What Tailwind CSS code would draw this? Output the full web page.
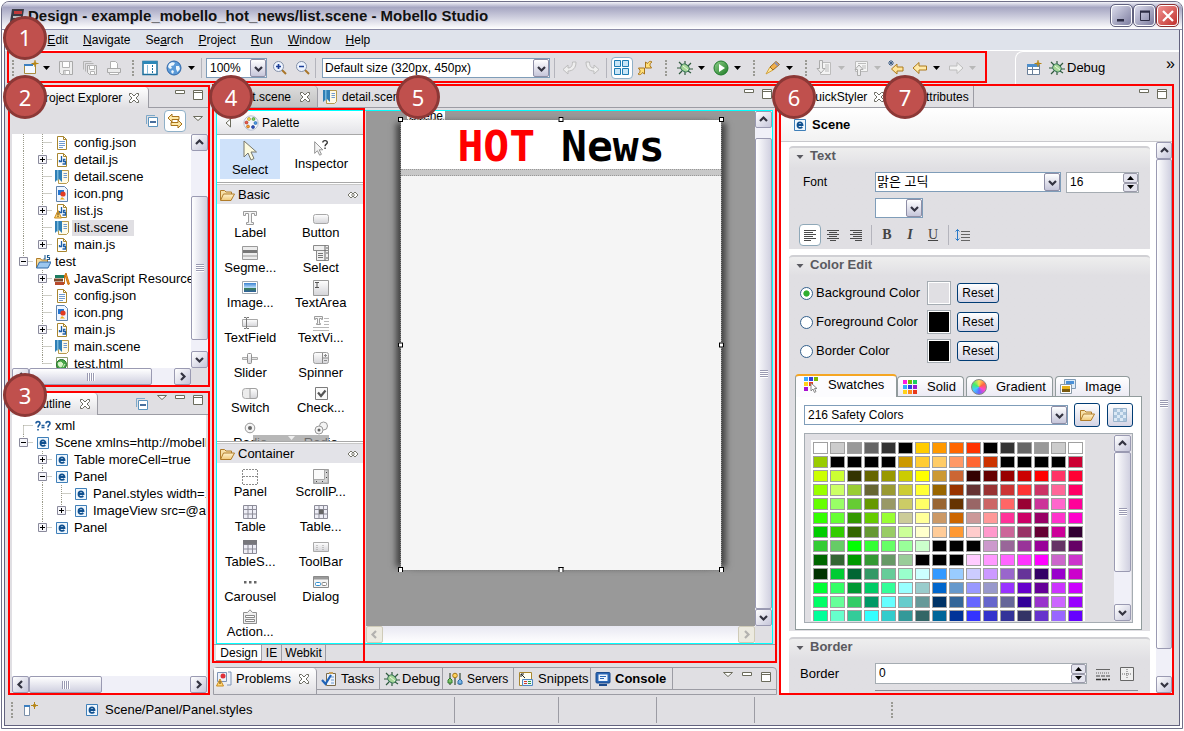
<!DOCTYPE html>
<html lang="en">
<head>
<meta charset="utf-8">
<title>Design - example_mobello_hot_news/list.scene - Mobello Studio</title>
<script src="https://cdn.jsdelivr.net/npm/@tailwindcss/browser@4"></script>
</head>
<body class="bg-white font-['Liberation_Sans','Noto_Sans_CJK_KR',sans-serif] text-[13px] leading-4 text-black">

<svg class="absolute size-0" aria-hidden="true">
  <defs>
    <linearGradient id="g-run" x1="0" y1="0" x2="1" y2="1"><stop offset="0" stop-color="#8fd08a"/><stop offset="1" stop-color="#1c7a24"/></linearGradient>
    <linearGradient id="g-btn" x1="0" y1="0" x2="0" y2="1"><stop offset="0" stop-color="#fff"/><stop offset="1" stop-color="#d4d4d8"/></linearGradient>
    <linearGradient id="g-fold" x1="0" y1="0" x2="0" y2="1"><stop offset="0" stop-color="#fff3cf"/><stop offset="1" stop-color="#f0c878"/></linearGradient>
    <linearGradient id="g-sky" x1="0" y1="0" x2="0" y2="1"><stop offset="0" stop-color="#3b82d0"/><stop offset=".55" stop-color="#bfe3ff"/><stop offset=".6" stop-color="#3c7f5a"/><stop offset="1" stop-color="#2d5fa0"/></linearGradient>
  </defs>
  <symbol id="chev" viewBox="0 0 9 9"><path d="M1 3l3.500 3.500L8 3" fill="none" stroke="#333340" stroke-width="2.200"/></symbol>
  <symbol id="arrow" viewBox="0 0 7 4"><path d="M0 0h7L3.500 4z" fill="currentColor"/></symbol>
  <symbol id="x" viewBox="0 0 12 12"><path d="M1.500 1.500h2L6 4l2.500-2.500h2v2L8 6l2.500 2.500v2h-2L6 8l-2.500 2.500h-2v-2L4 6 1.500 3.500z" fill="#fff" stroke="#6b6b62"/></symbol>
  <symbol id="min" viewBox="0 0 12 12"><path d="M1.500 1.500h9v3h-9z" fill="#fff" stroke="#6b6b5c"/></symbol>
  <symbol id="max" viewBox="0 0 12 12"><path d="M1.500 1.500h9v9h-9zM1.500 3.500h9" fill="#fff" stroke="#6b6b5c"/></symbol>
  <symbol id="menu" viewBox="0 0 12 12"><path d="M1.500 1.500h9L6 5.500z" fill="#fff" stroke="#6b6b5c"/></symbol>
  <symbol id="collapse" viewBox="0 0 16 16"><path d="M2.500 11V2.500H11" fill="none" stroke="#7fa9c8"/><path d="M4.500 4.500h9v9h-9z" fill="#fff" stroke="#5b93bd"/><path d="M6 9h6" stroke="#0c3f7c" stroke-width="1.500"/></symbol>
  <symbol id="link" viewBox="0 0 16 16"><path d="M1 5l4-4v2.500h7v3H5V9z" fill="#ffe9a8" stroke="#a8731c"/><path d="M15 11l-4-4v2.500H4v3h7V15z" fill="#ffe9a8" stroke="#a8731c"/></symbol>
  <symbol id="file" viewBox="0 0 16 16"><path d="M3.500 1.500h6l3 3v10h-9z" fill="#fff" stroke="#a8862f"/><path d="M9.500 1.500v3h3" fill="none" stroke="#a8862f"/><path d="M5 6.500h6M5 8.500h6M5 10.500h6M5 12.500h4" stroke="#6f9bd0"/></symbol>
  <symbol id="js" viewBox="0 0 16 16"><path d="M3.500 1.500h6l3 3v10h-9z" fill="#fff" stroke="#a8862f"/><path d="M9.500 1.500v3h3" fill="none" stroke="#a8862f"/><path d="M7.500 4v5.500h-2V8M11.500 7.500h-2v2h2v2.500h-3" fill="none" stroke="#1c5fa8" stroke-width="1.300"/></symbol>
  <symbol id="jswarn" viewBox="0 0 16 16"><use href="#js"/><path d="M4 7.500L7.500 15H.5z" fill="#ffd779" stroke="#c98a1d"/><path d="M4 9.500v3M4 13v1" stroke="#5a3a00"/></symbol>
  <symbol id="scene" viewBox="0 0 16 16"><path d="M4.500 1.500h10v11l-2 2h-8z" fill="#fffbe8" stroke="#b79b4e"/><path d="M9.500 4.500h3.500M9.500 6.500h3.500M9.500 8.500h3.500" stroke="#6f9bd0"/><path d="M1 1h7v12l-3.500-3.500L1 13z" fill="#2f7fb5"/><path d="M3 1h1.500v9.500L3 12z" fill="#75b7dd"/></symbol>
  <symbol id="png" viewBox="0 0 16 16"><path d="M2.500.5h8l3 3v12h-11z" fill="#eef5ff" stroke="#5f83ad"/><path d="M4 4h6v5H4z" fill="#2475d0"/><circle cx="9" cy="8" r="2.600" fill="#e23b22"/><path d="M8 11l3 2.500H6z" fill="#f2b01c"/></symbol>
  <symbol id="proj" viewBox="0 0 16 16"><path d="M1.500 14V4.500h4l1 1.500h6v2" fill="#f7dc9a" stroke="#b07c2a"/><path d="M1.500 14L4.500 8H16l-3 6z" fill="#9cc7ee" stroke="#2f6aa8"/><path d="M10 1v4H8.500M14.500 1.500h-2v2h2v2h-2.500" fill="none" stroke="#1d5c94" stroke-width="1.100"/></symbol>
  <symbol id="books" viewBox="0 0 16 16"><path d="M1 4h9v3H1z" fill="#1f7d62"/><path d="M0 7.500h9v3H0z" fill="#7c4a2a"/><path d="M1 11h9v3H1z" fill="#b8492b"/><path d="M12 2l3.500 11-1.500.5L11 4zM10.500 13V4" fill="#f29a1f" stroke="#c9700f"/></symbol>
  <symbol id="html" viewBox="0 0 16 16"><path d="M2.500 1.500h11v13h-11z" fill="#fff" stroke="#8a9a6a"/><circle cx="7.500" cy="8.500" r="5" fill="#49a84a" stroke="#21702a"/><path d="M4 7l3-1 2 2-2 3-2-1zM9 11l2-3" fill="#d9f3c8" stroke="#d9f3c8"/></symbol>
  <symbol id="e" viewBox="0 0 16 16"><path d="M2.500 2.500h11v11h-11z" fill="#eef6fd" stroke="#3f7fb8"/><path d="M5.200 8h5.300c0-3.400-5-3.400-5 .2 0 3.300 3.600 3 4.800 1.800" fill="none" stroke="#10508f" stroke-width="1.800"/></symbol>
  <symbol id="xml" viewBox="0 0 16 16"><path d="M1 5.500c0-2.500 4-2.500 4 0C5 7 3 7 3 9.500M3 11v1.500M11 5.500c0-2.500 4-2.500 4 0 0 1.500-2 1.500-2 4M13 11v1.500M6.500 7.500h3M6.500 9.500h3" fill="none" stroke="#1f5c9c" stroke-width="1.600"/></symbol>
  <symbol id="new" viewBox="0 0 16 16"><path d="M1.500 4.500h11v9h-11z" fill="#f3f8ff" stroke="#a98a3c"/><path d="M1 4h9v2H1z" fill="#3c7fc0"/><path d="M12 0v7M8.500 3.500h7M12 1.500l1.500 2-1.500 2-1.500-2z" fill="#fff0a0" stroke="#b58518"/></symbol>
  <symbol id="save" viewBox="0 0 16 16"><path d="M1.500 1.500h13v13h-11l-2-2z" fill="#eee" stroke="#a9a9a9"/><path d="M4.500 1.500h7v6h-7zM5.500 10.500h6v4h-6z" fill="#fff" stroke="#b4b4b4"/><path d="M7 11v3" stroke="#aaa"/></symbol>
  <symbol id="saveall" viewBox="0 0 16 16"><path d="M1.500 9.500v-8h8M3.500 11.500v-8h8" fill="none" stroke="#b4b4b4"/><path d="M5.500 5.500h9v9h-7l-2-2z" fill="#eee" stroke="#a9a9a9"/><path d="M7.500 5.500h5v4h-5zM8.500 11.500h4v3h-4z" fill="#fff" stroke="#b4b4b4"/></symbol>
  <symbol id="print" viewBox="0 0 16 16"><path d="M4.500 8V1.500h5l2 2V8" fill="#fff" stroke="#b0b0b0"/><path d="M1.500 8.500h13v4h-13z" fill="#ececec" stroke="#a9a9a9"/><path d="M3.500 12.500h9v2h-9z" fill="#fff" stroke="#b0b0b0"/></symbol>
  <symbol id="layout" viewBox="0 0 16 16"><path d="M1 1.500h14v13H1z" fill="#fff" stroke="#1d6f9c" stroke-width="1.500"/><path d="M1 1h14v3H1z" fill="#2c88b8"/><path d="M5.500 5v9" stroke="#8dbfdc"/><path d="M10.500 5v9" stroke="#1d6f9c" stroke-dasharray="2 1"/></symbol>
  <symbol id="globe" viewBox="0 0 16 16"><circle cx="8" cy="8" r="7" fill="#5b9ad8" stroke="#2e66a8"/><path d="M3 4c2-2 5-2 6-1L7.500 5.500 5 6l1 2-2 1-2-2zM10 6l3 0 1 3-2.500 3-1.500-3zM6 10l2 1-1 3-2-2z" fill="#eef6fc"/></symbol>
  <symbol id="zin" viewBox="0 0 16 16"><path d="M9.500 9.500L14 14" stroke="#a9762a" stroke-width="2"/><circle cx="6.500" cy="6.500" r="5" fill="#eef4ff" stroke="#8390a8"/><path d="M4 6.500h5M6.500 4v5" stroke="#1d3f98" stroke-width="1.700"/></symbol>
  <symbol id="zout" viewBox="0 0 16 16"><path d="M9.500 9.500L14 14" stroke="#a9762a" stroke-width="2"/><circle cx="6.500" cy="6.500" r="5" fill="#eef4ff" stroke="#8390a8"/><path d="M4 6.500h5" stroke="#1d3f98" stroke-width="1.700"/></symbol>
  <symbol id="undo" viewBox="0 0 16 16"><path d="M1 9.500L6 5v3c3 0 4.500-2 4.500-6H14c0 6-3 9-8 9v3z" fill="#eee" stroke="#bdbdbd"/></symbol>
  <symbol id="redo" viewBox="0 0 16 16"><path d="M15 9.500L10 5v3C7 8 5.500 6 5.500 2H2c0 6 3 9 8 9v3z" fill="#eee" stroke="#bdbdbd"/></symbol>
  <symbol id="four" viewBox="0 0 16 16"><path d="M.5.5h6v6h-6zM8.500.5h6v6h-6zM.5 8.500h6v6h-6zM8.500 8.500h6v6h-6z" fill="#c9e6f7" stroke="#1f7db4"/></symbol>
  <symbol id="refresh" viewBox="0 0 16 16"><path d="M8.500 8V2l2 1.500c1.500-2.500 3-2.500 4.500-1.500-1.500.5-2 1.500-2 3.500l1.500 2.500zM7.500 8v6l-2-1.500c-1.500 2.500-3 2.500-4.500 1.500 1.500-.5 2-1.500 2-3.500L1.500 8z" fill="#ffe07a" stroke="#a8741a"/></symbol>
  <symbol id="bug" viewBox="0 0 16 16"><path d="M5 5L2 2M8 4V1M11 6l3-3M4 8H0M5 11l-3 3M8 12v3M12 9h4M11 11l3 2" stroke="#2f5a3d" stroke-width="1.200"/><ellipse cx="8" cy="8" rx="4.500" ry="3.600" fill="#a6d698" stroke="#2c6a50" transform="rotate(35 8 8)"/><path d="M6 6l5 4" stroke="#e8fbe0"/></symbol>
  <symbol id="run" viewBox="0 0 16 16"><circle cx="8" cy="8" r="7" fill="url(#g-run)" stroke="#1f7a2c"/><path d="M6 4l6 4-6 4z" fill="#fff"/></symbol>
  <symbol id="torch" viewBox="0 0 16 16"><path d="M1 14l4-7 3 3z" fill="#ffe9a0" stroke="#d1a03a"/><path d="M5 7l6-5.500 3.500 3L8 10z" fill="#f2b04c" stroke="#9c6a24"/><path d="M10 2.500l3 3" stroke="#8c90b8" stroke-width="2"/></symbol>
  <symbol id="imp" viewBox="0 0 16 16"><path d="M4.500 2.500h10v12h-10z" fill="#f4f4f4" stroke="#bcbcbc"/><path d="M9 5h4M9 7h4M9 9h4M9 11h4" stroke="#bcbcbc"/><path d="M3.500.5h3v8h2.500L5 13 1 8.500h2.500z" fill="#eee" stroke="#ababab"/></symbol>
  <symbol id="exp" viewBox="0 0 16 16"><path d="M2.500 1.500h12v10h-12z" fill="#f4f4f4" stroke="#bcbcbc"/><path d="M5 3.500h8M9 6h4M9 8h4" stroke="#bcbcbc"/><path d="M4.500 15.500v-6H2L6 5l4 4.500H7.500v6z" fill="#eee" stroke="#ababab"/></symbol>
  <symbol id="sback" viewBox="0 0 16 16"><path d="M3.500 9L9 4v3h6v4H9v3z" fill="#ffe49a" stroke="#ad7a1c"/><path d="M3 0v6M0 3h6M1 1l4 4M5 1L1 5" stroke="#3e5f86"/></symbol>
  <symbol id="back" viewBox="0 0 16 16"><path d="M1 8l6-5.500V6h7.500v4H7v3.500z" fill="#ffe9a8" stroke="#ad7a1c"/></symbol>
  <symbol id="fwd" viewBox="0 0 16 16"><path d="M15 8L9 2.500V6H1.500v4H9v3.500z" fill="#f2f2f2" stroke="#bdbdbd"/></symbol>
  <symbol id="persp" viewBox="0 0 16 16"><path d="M1.500 4.500h12v10h-12zM1.500 9.500h12M6.500 7v7.500" fill="#fff" stroke="#6a7f98"/><path d="M1 4h12v3H1z" fill="#4f8fca"/><path d="M12 0v7M8.500 3.500h7M12 1.500l1.500 2-1.500 2-1.500-2z" fill="#fff0a0" stroke="#b58518"/></symbol>
  <symbol id="fast" viewBox="0 0 16 16"><path d="M2.500 3.500h5v10h-5z" fill="#fff" stroke="#7a8fa8"/><path d="M2 3h6v2H2z" fill="#3c7fc0"/><path d="M12.500 0v7M9 3.500h7M12.500 1.500l1.500 2-1.500 2-1.500-2z" fill="#fff0a0" stroke="#b58518"/></symbol>
  <symbol id="palette" viewBox="0 0 16 16"><circle cx="8" cy="8" r="7.200" fill="#f2f5fb" stroke="#b8c0d0"/><g stroke-width=".6"><circle cx="6" cy="4" r="1.500" fill="#ffe14a" stroke="#a58a10"/><circle cx="10.500" cy="4" r="1.500" fill="#7ed05a" stroke="#3b7c22"/><circle cx="3.500" cy="7.500" r="1.500" fill="#ef5a4a" stroke="#9c2318"/><circle cx="12.500" cy="8" r="1.500" fill="#4a9be8" stroke="#1c5aa0"/><circle cx="5" cy="11.500" r="1.500" fill="#f79a2a" stroke="#a85a0c"/><circle cx="10" cy="12" r="1.500" fill="#2c4fc0" stroke="#16307c"/></g></symbol>
  <symbol id="folder" viewBox="0 0 16 16"><path d="M1.500 13V3.500h4l1.500 1.500h5.500V7" fill="#f7e0a8" stroke="#b07c2a"/><path d="M1.500 13.500L4.500 7h11l-3.500 6.500z" fill="url(#g-fold)" stroke="#b07c2a"/></symbol>
  <symbol id="pin" viewBox="0 0 12 10"><path d="M4 2L1 5l3 3 2-2 2 2 3-3-3-3-2 2zM4 5h4" fill="#fff" stroke="#77776c"/></symbol>
  <symbol id="cursor" viewBox="0 0 20 24"><path d="M4 2v16l4-4 3 7 3-1.500-3-6.500h5.500z" fill="#fdfbe0" stroke="#77776a"/></symbol>
  <symbol id="inspect" viewBox="0 0 20 20"><path d="M3 3v13l3-3 2.500 5 2-1-2.500-5h4z" fill="#f4f4f4" stroke="#8a8a8a"/><path d="M12 4c0-3 5-3 5 0 0 2-2.500 1.500-2.500 4M14.500 9.500V11" fill="none" stroke="#333" stroke-width="1.500"/></symbol>
  <symbol id="p-label" viewBox="0 0 16 16"><path d="M1.500 1.500h13v4h-2v-2h-3v9h2v2h-7v-2h2v-9h-3v2h-2z" fill="#f5f5f5" stroke="#9c9c9c"/></symbol>
  <symbol id="p-button" viewBox="0 0 16 16"><rect x=".5" y="4.500" width="15" height="9" rx="2" fill="url(#g-btn)" stroke="#a8a8a8"/></symbol>
  <symbol id="p-segment" viewBox="0 0 16 16"><path d="M.5 1.500h15v13H.5z" fill="#ececec" stroke="#9a9a9a"/><path d="M1 5h14v3H1z" fill="#777"/><path d="M1 11h14" stroke="#9a9a9a"/></symbol>
  <symbol id="p-select" viewBox="0 0 16 16"><path d="M.5.500h15v5H.5zM3.500 5.500h12v10h-12z" fill="#f0f0f0" stroke="#8a8a8a"/><path d="M5 8.500h5M5 10.500h5M5 12.500h5" stroke="#777"/><path d="M12 .500v15M13 3h2M13 8h2M13 13h2" stroke="#666"/></symbol>
  <symbol id="p-image" viewBox="0 0 16 16"><path d="M.5 1.500h15v12H.5z" fill="#fff" stroke="#a0a8b0"/><path d="M2 3h12v9H2z" fill="url(#g-sky)"/></symbol>
  <symbol id="p-textarea" viewBox="0 0 16 16"><path d="M.5.500h15v15H.5z" fill="url(#g-btn)" stroke="#9a9a9a"/><path d="M2 2.500h4M2 7.500h4M4 2.500v5" stroke="#555"/></symbol>
  <symbol id="p-textfield" viewBox="0 0 16 16"><path d="M.5 4.500h15v7H.5z" fill="url(#g-btn)" stroke="#a8a8a8"/><path d="M2 2.500h2l.5.500.5-.5h2M2 13.500h2l.5-.5.500.5h2M4.500 3v10" fill="none" stroke="#777"/></symbol>
  <symbol id="p-textview" viewBox="0 0 16 16"><path d="M1.500 1.500h8v3h-1v-1h-2v5h1v1h-4v-1h1v-5h-2v1h-1z" fill="#f5f5f5" stroke="#9c9c9c"/><path d="M11 3.500h5M11 6.500h5M11 9.500h5M0 12.500h16M0 15.500h16" stroke="#b8b8b8"/></symbol>
  <symbol id="p-slider" viewBox="0 0 16 16"><path d="M.5 7.500h15v2H.5z" fill="#e4e4e4" stroke="#aaa"/><rect x="5.500" y="3.500" width="4" height="10" rx="1" fill="url(#g-btn)" stroke="#909090"/></symbol>
  <symbol id="p-spinner" viewBox="0 0 16 16"><rect x=".5" y="2.500" width="15" height="11" rx="2" fill="url(#g-btn)" stroke="#a0a0a0"/><path d="M9.500 3v10M10 8h5M11 5.500h3M12.500 4v3M11 10.500h3" stroke="#8a8a8a"/></symbol>
  <symbol id="p-switch" viewBox="0 0 16 16"><rect x=".5" y="3.500" width="15" height="10" rx="3" fill="#ececec" stroke="#a8a8a8"/><path d="M8 3.500h5a2.500 2.500 0 0 1 2.500 2.500v5a2.500 2.500 0 0 1-2.500 2.500H8z" fill="url(#g-btn)" stroke="#a0a0a0"/></symbol>
  <symbol id="p-check" viewBox="0 0 16 16"><path d="M2.500 2.500h12v12h-12z" fill="#fafafa" stroke="#7c7c7c"/><path d="M5 7.500l3 3.500 4.500-5.500" fill="none" stroke="#555" stroke-width="2.200"/></symbol>
  <symbol id="p-radio" viewBox="0 0 16 16"><circle cx="8" cy="8" r="4.800" fill="#f4f4f4" stroke="#999"/><circle cx="8" cy="8" r="2" fill="#666"/></symbol>
  <symbol id="p-radios" viewBox="0 0 16 16"><circle cx="10.500" cy="6" r="4" fill="#f4f4f4" stroke="#999"/><circle cx="6" cy="10" r="4" fill="#f4f4f4" stroke="#999"/><circle cx="6" cy="10" r="1.500" fill="#666"/></symbol>
  <symbol id="p-panel" viewBox="0 0 16 16"><path d="M.5 1v14M15.500 1v14M1 .5h14M1 7.500h14M1 15.500h14" stroke="#8c8c8c" stroke-dasharray="2 1"/></symbol>
  <symbol id="p-scroll" viewBox="0 0 16 16"><path d="M.5.500h15v14H.5z" fill="#fafafa" stroke="#999"/><path d="M11.500 1v9.500H1V14h14V1z" fill="#d4d4d4" stroke="#aaa"/><path d="M13 3h1v1h-1zM13 8h1v1h-1zM3 12h1v1H3zM9 12h1v1H9z" fill="#444"/></symbol>
  <symbol id="p-table" viewBox="0 0 16 16"><path d="M1.500 1.500h13v13h-13zM1.500 5.500h13M1.500 10h13M6 1.500v13M10.500 1.500v13" fill="#eeeef6" stroke="#8c8c98"/></symbol>
  <symbol id="p-tablecell" viewBox="0 0 16 16"><use href="#p-table"/><path d="M6 5.500h4.500V10H6z" fill="#666"/></symbol>
  <symbol id="p-tablesec" viewBox="0 0 16 16"><use href="#p-table"/><path d="M1 1h14v4.500H1z" fill="#77777c"/></symbol>
  <symbol id="p-toolbar" viewBox="0 0 16 16"><path d="M.5 3.500h15v9H.5z" fill="url(#g-btn)" stroke="#aaa"/><path d="M4 6v5M10 6v5" stroke="#999" stroke-dasharray="1 1"/></symbol>
  <symbol id="p-carousel" viewBox="0 0 16 16"><path d="M2 7h2.500v2.500H2zM7 7h2.500v2.500H7zM12 7h2.500v2.500H12z" fill="#666"/></symbol>
  <symbol id="p-dialog" viewBox="0 0 16 16"><path d="M.5 2.500h15v11H.5z" fill="#f4f4f4" stroke="#8a8a8a"/><path d="M1 3h14v2.500H1z" fill="#9a9a9a"/><rect x="2.500" y="8.500" width="5" height="3" rx="1" fill="#fff" stroke="#2f8fd0"/><rect x="9" y="8.500" width="4.500" height="3" rx="1" fill="#fff" stroke="#888"/></symbol>
  <symbol id="p-action" viewBox="0 0 16 16"><path d="M1.500 3.500h4L8 .8l2.500 2.700h4v11h-13z" fill="#efefef" stroke="#909090"/><path d="M3.500 6.500h9v2h-9zM3.500 10.500h9v2h-9z" fill="#fff" stroke="#888"/></symbol>
  <symbol id="problems" viewBox="0 0 16 16"><path d="M1.500 1.500h9v9h-9zM12 1h3v13h-4" fill="#eef2fa" stroke="#7d93b5"/><circle cx="7" cy="5" r="2.500" fill="#e0313a"/><path d="M4 8l3.500 7h-7z" fill="#ffd779" stroke="#c98a1d"/><path d="M4 10v3" stroke="#5a3a00"/></symbol>
  <symbol id="tasks" viewBox="0 0 16 16"><path d="M5.500 2.500h9v12h-9z" fill="#eef4fc" stroke="#7a6a4a"/><path d="M8 1h4v2H8z" fill="#caa25a"/><path d="M10 6h3M10 9h3M10 12h3" stroke="#6f9bd0"/><path d="M1 9l3.500 4L10 4" fill="none" stroke="#1e63b8" stroke-width="2.200"/></symbol>
  <symbol id="servers" viewBox="0 0 16 16"><path d="M3 2v12M8 2v12M13 2v12" stroke="#5a6a5a" stroke-width="1.500"/><path d="M1 9l2-2 2 2v3H1z" fill="#7ec46a" stroke="#2f7a2a"/><circle cx="8" cy="4.500" r="2.300" fill="#ffd35a" stroke="#a8791a"/><path d="M11 10l2-2 2 2v3h-4z" fill="#7ab8e8" stroke="#2b6aa8"/></symbol>
  <symbol id="snippets" viewBox="0 0 16 16"><path d="M1.500 1.500h12v13h-12z" fill="#fffdf0" stroke="#a8862f"/><path d="M3 3l4 4M3 3h3M3 3v3" stroke="#222"/><path d="M4.500 8.500h10v6h-10z" fill="#eaf3ff" stroke="#4f86c0"/><path d="M6 10.500h3M6 12.500h3" stroke="#d43a2a"/><path d="M10 10.500h3M10 12.500h3" stroke="#2a9a3a"/></symbol>
  <symbol id="console" viewBox="0 0 16 16"><rect x="1" y="1.500" width="14" height="10.500" rx="1" fill="#2b67b5" stroke="#1c4a8c"/><path d="M3.500 3.500h9v6.500h-9z" fill="#eef5ff"/><path d="M5 5.500h6M5 7.500h4" stroke="#2b67b5"/><path d="M4 14h8" stroke="#1c4a8c" stroke-width="2"/></symbol>
  <symbol id="al-l" viewBox="0 0 16 16"><path d="M2 3.500h12M2 5.500h9M2 7.500h12M2 9.500h9M2 11.500h12M2 13.500h7" stroke="#4a4a4a"/></symbol>
  <symbol id="al-c" viewBox="0 0 16 16"><path d="M2 3.500h12M4 5.500h8M2 7.500h12M4 9.500h8M2 11.500h12M5 13.500h6" stroke="#4a4a4a"/></symbol>
  <symbol id="al-r" viewBox="0 0 16 16"><path d="M2 3.500h12M5 5.500h9M2 7.500h12M5 9.500h9M2 11.500h12M7 13.500h7" stroke="#4a4a4a"/></symbol>
  <symbol id="lineh" viewBox="0 0 16 16"><path d="M6 4.500h9M6 7.500h9M6 10.500h9M6 13.500h9" stroke="#666"/><path d="M2.500 2.500v11M.5 4.500l2-2 2 2M.5 11.500l2 2 2-2" fill="none" stroke="#2a7ac8"/></symbol>
  <symbol id="sw" viewBox="0 0 16 16"><path d="M1 0h4v4H1z" fill="#35a9ff"/><path d="M6 0h4v4H6z" fill="#2f3fe0"/><path d="M11 0h4v4h-4z" fill="#7ab800"/><path d="M1 5h4v4H1z" fill="#ffd21a"/><path d="M6 5h4v4H6z" fill="#e8381a"/><path d="M1 10h4v4H1z" fill="#a80fd0"/><path d="M8 6v8l2-2 1.500 3.500 1.500-1-1.500-3H14z" fill="#fff" stroke="#888"/></symbol>
  <symbol id="solid" viewBox="0 0 16 16"><path d="M1 1h4v4H1z" fill="#ff1ae0"/><path d="M6 1h4v4H6z" fill="#6fbf00"/><path d="M11 1h4v4h-4z" fill="#1ad060"/><path d="M1 6h4v4H1z" fill="#35a9ff"/><path d="M6 6h4v4H6z" fill="#2f3fe0"/><path d="M11 6h4v4h-4z" fill="#9a1ad0"/><path d="M1 11h4v4H1z" fill="#ffd21a"/><path d="M6 11h4v4H6z" fill="#ff8a1a"/><path d="M11 11h4v4h-4z" fill="#e8381a"/></symbol>
  <symbol id="imgs" viewBox="0 0 16 16"><path d="M4.500.500h11v9h-11z" fill="#dcebf8" stroke="#7f9ab5"/><path d="M6 2h8v3H6z" fill="#4a90d8"/><path d="M.5 5.500h11v9H.5z" fill="#fff" stroke="#8a9aa8"/><path d="M2 7h8v3H2z" fill="#e8b21a"/><path d="M2 10h8v3H2z" fill="#7a5a10"/></symbol>
  <symbol id="checker" viewBox="0 0 16 16"><path d="M1.500 1.500h13v13h-13z" fill="#dce9f5" stroke="#9ab4cc"/><path d="M2 2h3v3H2zM8 2h3v3H8zM5 5h3v3H5zM11 5h3v3h-3zM2 8h3v3H2zM8 8h3v3H8zM5 11h3v3H5zM11 11h3v3h-3z" fill="#aac4dc"/></symbol>
  <symbol id="lines" viewBox="0 0 16 16"><path d="M1 3.500h14" stroke="#666"/><path d="M1 7h14" stroke="#666" stroke-dasharray="1 1"/><path d="M1 10h14" stroke="#444" stroke-dasharray="4 1"/><path d="M1 13.500h14" stroke="#333" stroke-width="1.500" stroke-dasharray="5 1"/></symbol>
  <symbol id="cells" viewBox="0 0 16 16"><path d="M1.500 1.500h13v13h-13z" fill="#f0f0f0" stroke="#666"/><path d="M8 3v10M3 8h10" stroke="#666" stroke-dasharray="1 1"/></symbol>
</svg>

<div class="h-screen pt-px pr-px pb-[2px] pl-px">
<div class="flex h-full flex-col overflow-hidden rounded-t-lg border border-[#6f6f88] bg-[#e0dfe3]">

  <!-- title bar -->
  <header class="flex h-7 shrink-0 items-center border-b border-[#8c8ca8] bg-linear-to-b from-[#f4f4fa] via-[#a6a6c2] via-20% to-white pr-1 pl-2">
    <svg class="size-4" viewBox="0 0 16 16"><path d="M2 1h12l-2 13H0z" fill="#3a3a44"/><path d="M4 3h8v3H4z" fill="#c23a3a"/><path d="M3 8h8v2H3z" fill="#bbb"/></svg>
    <h1 class="ml-0.5 flex-1 text-[15px] font-bold whitespace-nowrap text-[#111] [text-shadow:1px_1px_0_#c8c8d8]">Design - example_mobello_hot_news/list.scene - Mobello Studio</h1>
    <div class="flex gap-0.5">
      <button aria-label="Minimize" class="grid size-[21px] place-items-center rounded border border-white bg-linear-to-br from-[#dcdcec] to-[#7e7ea0] outline outline-[#62627e]"><svg class="size-3" viewBox="0 0 12 12"><path d="M1 9h7v2.500H1z" fill="#2c2c44"/></svg></button>
      <button aria-label="Maximize" class="grid size-[21px] place-items-center rounded border border-white bg-linear-to-br from-[#dcdcec] to-[#7e7ea0] outline outline-[#62627e]"><svg class="size-3" viewBox="0 0 12 12"><path d="M1.500 2h9v8.500h-9z" fill="none" stroke="#2c2c44"/><path d="M1 1.500h10" stroke="#2c2c44" stroke-width="2"/></svg></button>
      <button aria-label="Close" class="grid size-[21px] place-items-center rounded border border-white bg-linear-to-br from-[#f09090] to-[#c02c2c] outline outline-[#8c3030]"><svg class="size-3" viewBox="0 0 12 12"><path d="M1 1l10 10M11 1L1 11" stroke="#fff" stroke-width="2.200"/></svg></button>
    </div>
  </header>

  <div class="flex min-h-0 flex-1 flex-col border-2 border-t-0 border-white">
  <div class="flex min-h-0 flex-1 flex-col border border-t-0 border-[#62627e]">

    <!-- menu bar -->
    <nav class="flex h-5 shrink-0 items-center gap-[15px] bg-[#dfe3eb] pl-2 text-xs">
      <a href="#"><u>F</u>ile</a><a href="#"><u>E</u>dit</a><a href="#"><u>N</u>avigate</a><a href="#">Se<u>a</u>rch</a><a href="#"><u>P</u>roject</a><a href="#"><u>R</u>un</a><a href="#"><u>W</u>indow</a><a href="#"><u>H</u>elp</a>
    </nav>

    <!-- tool bar -->
    <div class="flex h-[34px] shrink-0 border-t border-white pl-0.5 text-xs">
      <div class="relative flex h-8 w-[980px] shrink-0 items-center border-2 border-[#f00] pt-0.5 pl-[3px]">
        <i class="h-4 w-0 border-l-2 border-dotted border-[#9a9a94]"></i>
        <button aria-label="New" class="ml-[9px]"><svg class="size-4"><use href="#new"/></svg></button>
        <svg class="ml-1 h-1 w-[7px]"><use href="#arrow"/></svg>
        <button aria-label="Save" class="ml-2"><svg class="size-4"><use href="#save"/></svg></button>
        <button aria-label="Save all" class="ml-2"><svg class="size-4"><use href="#saveall"/></svg></button>
        <button aria-label="Print" class="ml-2"><svg class="size-4"><use href="#print"/></svg></button>
        <i class="ml-[10px] h-4 w-0 border-l-2 border-dotted border-[#9a9a94]"></i>
        <button aria-label="Layout" class="ml-2"><svg class="size-4"><use href="#layout"/></svg></button>
        <button aria-label="Browser" class="ml-2"><svg class="size-4"><use href="#globe"/></svg></button>
        <svg class="ml-1.5 h-1 w-[7px]"><use href="#arrow"/></svg>
        <i class="ml-1.5 h-5 w-px bg-[#b4b4bc]"></i>
        <div class="relative ml-1 w-[61px]">
          <select aria-label="Zoom" class="h-5 w-full appearance-none border border-[#7f9db9] bg-white pl-[3px]"><option>100%</option></select>
          <span class="pointer-events-none absolute inset-y-px right-px grid w-4 place-items-center rounded-xs border border-[#8e8ea6] bg-linear-to-b from-white to-[#c6c6da]"><svg class="size-[9px]"><use href="#chev"/></svg></span>
        </div>
        <button aria-label="Zoom in" class="ml-[5px]"><svg class="size-4"><use href="#zin"/></svg></button>
        <button aria-label="Zoom out" class="ml-[7px]"><svg class="size-4"><use href="#zout"/></svg></button>
        <i class="ml-1 h-5 w-px bg-[#b4b4bc]"></i>
        <div class="relative ml-1.5 w-[228px]">
          <select aria-label="Device size" class="h-5 w-full appearance-none border border-[#7f9db9] bg-white pl-0.5"><option>Default size (320px, 450px)</option></select>
          <span class="pointer-events-none absolute inset-y-px right-px grid w-4 place-items-center rounded-xs border border-[#8e8ea6] bg-linear-to-b from-white to-[#c6c6da]"><svg class="size-[9px]"><use href="#chev"/></svg></span>
        </div>
        <i class="ml-1 h-5 w-px bg-[#b4b4bc]"></i>
        <button aria-label="Undo" class="ml-[7px]"><svg class="size-4"><use href="#undo"/></svg></button>
        <button aria-label="Redo" class="ml-1.5"><svg class="size-4"><use href="#redo"/></svg></button>
        <i class="ml-1.5 h-5 w-px bg-[#b4b4bc]"></i>
        <button aria-label="Grid" class="ml-1 grid size-[22px] place-items-center rounded-sm border border-[#8fb0c8] bg-white"><svg class="size-4"><use href="#four"/></svg></button>
        <button aria-label="Refresh" class="ml-1"><svg class="size-4"><use href="#refresh"/></svg></button>
        <i class="ml-3 h-4 w-0 border-l-2 border-dotted border-[#9a9a94]"></i>
        <button aria-label="Debug" class="ml-[10px]"><svg class="size-4"><use href="#bug"/></svg></button>
        <svg class="ml-[5px] h-1 w-[7px]"><use href="#arrow"/></svg>
        <button aria-label="Run" class="ml-2"><svg class="size-4"><use href="#run"/></svg></button>
        <svg class="ml-[5px] h-1 w-[7px]"><use href="#arrow"/></svg>
        <i class="ml-3 h-4 w-0 border-l-2 border-dotted border-[#9a9a94]"></i>
        <button aria-label="Search" class="ml-[10px]"><svg class="size-4"><use href="#torch"/></svg></button>
        <svg class="ml-[5px] h-1 w-[7px]"><use href="#arrow"/></svg>
        <i class="ml-3 h-4 w-0 border-l-2 border-dotted border-[#9a9a94]"></i>
        <button aria-label="Next annotation" class="ml-[9px]"><svg class="size-4"><use href="#imp"/></svg></button>
        <svg class="ml-1.5 h-1 w-[7px] text-[#b8b8b8]"><use href="#arrow"/></svg>
        <button aria-label="Previous annotation" class="ml-2"><svg class="size-4"><use href="#exp"/></svg></button>
        <svg class="ml-[5px] h-1 w-[7px] text-[#b8b8b8]"><use href="#arrow"/></svg>
        <button aria-label="Last edit" class="ml-[7px]"><svg class="size-4"><use href="#sback"/></svg></button>
        <button aria-label="Back" class="ml-2"><svg class="size-4"><use href="#back"/></svg></button>
        <svg class="ml-[5px] h-1 w-[7px]"><use href="#arrow"/></svg>
        <button aria-label="Forward" class="ml-2"><svg class="size-4"><use href="#fwd"/></svg></button>
        <svg class="ml-[5px] h-1 w-[7px] text-[#b8b8b8]"><use href="#arrow"/></svg>
        <b class="absolute -top-[37px] -left-1.5 z-20 grid size-11 place-items-center rounded-full border-3 border-[#8c3836] bg-[#c0504d] font-['Noto_Sans'] text-[22px] font-normal text-white">1</b>
      </div>
      <div class="ml-[28px] flex flex-1 items-center rounded-tl-lg border-t border-l border-white bg-[#e0dfe3] pl-2.5 text-[13px]">
        <svg class="size-4"><use href="#persp"/></svg>
        <svg class="ml-[7px] size-4"><use href="#bug"/></svg>
        <span class="ml-0.5 flex-1">Debug</span>
        <span class="mb-2 pr-1 text-base">»</span>
      </div>
    </div>

    <!-- work area -->
    <main class="flex min-h-0 flex-1 pr-[5px] pl-[3px]">

      <!-- left column -->
      <div class="mr-0.5 flex w-[202px] shrink-0 flex-col gap-1 pt-px">
        <section class="relative flex h-[302px] shrink-0 flex-col border-2 border-[#f00]">
          <div class="flex h-[21px] shrink-0 border-b border-[#9c9ca4]">
            <div class="-mb-px flex w-[139px] items-center rounded-tr border-r border-[#9c9ca4] bg-linear-to-b from-white to-[#e0dfe3] pl-[27px] text-xs">Project Explorer<svg class="ml-1.5 size-3"><use href="#x"/></svg></div>
            <div class="flex flex-1 justify-end gap-1.5 pt-0.5 pr-1"><svg class="size-3"><use href="#min"/></svg><svg class="size-3"><use href="#max"/></svg></div>
          </div>
          <div class="flex h-[26px] shrink-0 items-center justify-end gap-1 pr-1">
            <svg class="size-4"><use href="#collapse"/></svg>
            <button aria-label="Link with editor" class="grid size-[22px] place-items-center rounded-sm border border-[#8fb0c8] bg-white"><svg class="size-4"><use href="#link"/></svg></button>
            <svg class="ml-0.5 size-3"><use href="#menu"/></svg>
          </div>
          <div class="flex min-h-0 flex-1 pl-0.5">
            <div class="flex min-w-0 flex-1 flex-col">
              <div id="explorer" class="min-h-0 flex-1 overflow-hidden bg-white pl-0.5"></div>
              <div class="flex h-[17px] shrink-0 bg-[#f0f0f8]">
                <button aria-label="Scroll left" class="grid w-[17px] place-items-center rounded-xs border border-[#9a9ab2] bg-linear-to-br from-white to-[#c6c6da]"><svg class="size-[9px] rotate-90"><use href="#chev"/></svg></button>
                <div class="flex-1"><div class="grid h-full w-[123px] place-items-center rounded-xs border border-[#9a9ab2] bg-linear-to-b from-white to-[#d0d0e0]"><i class="h-2 w-2 bg-[repeating-linear-gradient(90deg,#9a9ab2_0_1px,#fff_1px_2px)]"></i></div></div>
                <button aria-label="Scroll right" class="grid w-[17px] place-items-center rounded-xs border border-[#9a9ab2] bg-linear-to-br from-white to-[#c6c6da]"><svg class="size-[9px] -rotate-90"><use href="#chev"/></svg></button>
              </div>
            </div>
            <div class="mb-[17px] flex w-[17px] flex-col bg-[#f0f0f8]">
              <button aria-label="Scroll up" class="grid h-[17px] place-items-center rounded-xs border border-[#9a9ab2] bg-linear-to-br from-white to-[#c6c6da]"><svg class="size-[9px] rotate-180"><use href="#chev"/></svg></button>
              <div class="flex-1 pt-[45px]"><div class="grid h-[144px] place-items-center rounded-xs border border-[#9a9ab2] bg-linear-to-r from-white to-[#d0d0e0]"><i class="h-2 w-2 bg-[repeating-linear-gradient(#9a9ab2_0_1px,#fff_1px_2px)]"></i></div></div>
              <button aria-label="Scroll down" class="grid h-[17px] place-items-center rounded-xs border border-[#9a9ab2] bg-linear-to-br from-white to-[#c6c6da]"><svg class="size-[9px]"><use href="#chev"/></svg></button>
            </div>
          </div>
          <b class="absolute -top-3 -left-[7px] z-20 grid size-11 place-items-center rounded-full border-3 border-[#8c3836] bg-[#c0504d] font-['Noto_Sans'] text-[22px] font-normal text-white">2</b>
        </section>

        <section class="relative flex min-h-0 flex-1 flex-col border-2 border-[#f00]">
          <div class="flex h-[22px] shrink-0 border-b border-[#9c9ca4]">
            <div class="-mb-px flex w-[88px] items-center rounded-tr border-r border-[#9c9ca4] bg-linear-to-b from-white to-[#e0dfe3] pl-[23px] text-xs">Outline<svg class="ml-2 size-3"><use href="#x"/></svg></div>
            <div class="flex flex-1 justify-end gap-1.5 pt-px pr-1"><svg class="mt-0.5 size-4"><use href="#collapse"/></svg><svg class="size-3"><use href="#menu"/></svg><svg class="size-3"><use href="#min"/></svg><svg class="size-3"><use href="#max"/></svg></div>
          </div>
          <div id="outline" class="mr-0.5 ml-0.5 min-h-0 flex-1 overflow-hidden bg-white pt-0.5 pl-0.5"></div>
          <div class="mr-px ml-0.5 flex h-[17px] shrink-0 bg-[#f0f0f8]">
            <button aria-label="Scroll left" class="grid w-[17px] place-items-center rounded-xs border border-[#9a9ab2] bg-linear-to-br from-white to-[#c6c6da]"><svg class="size-[9px] rotate-90"><use href="#chev"/></svg></button>
            <div class="flex-1"><div class="grid h-full w-[73px] place-items-center rounded-xs border border-[#9a9ab2] bg-linear-to-b from-white to-[#d0d0e0]"><i class="h-2 w-2 bg-[repeating-linear-gradient(90deg,#9a9ab2_0_1px,#fff_1px_2px)]"></i></div></div>
            <button aria-label="Scroll right" class="grid w-[17px] place-items-center rounded-xs border border-[#9a9ab2] bg-linear-to-br from-white to-[#c6c6da]"><svg class="size-[9px] -rotate-90"><use href="#chev"/></svg></button>
          </div>
          <b class="absolute -top-5 -left-[7px] z-20 grid size-11 place-items-center rounded-full border-3 border-[#8c3836] bg-[#c0504d] font-['Noto_Sans'] text-[22px] font-normal text-white">3</b>
        </section>
      </div>

      <!-- centre column -->
      <div class="mr-0.5 flex min-w-0 flex-1 flex-col">
        <section class="relative flex min-h-0 flex-1 flex-col border-2 border-[#f00]">
          <div class="flex h-[22px] shrink-0 border-b border-[#9c9ca4]">
            <div class="flex w-[104px] items-center rounded-tr border-r border-[#9c9ca4] bg-linear-to-b from-[#dcdcdc] to-[#c2c2c2] pl-[27px] text-xs">list.scene<svg class="ml-2 size-3"><use href="#x"/></svg></div>
            <div class="flex flex-1 items-center pl-1 text-xs"><svg class="size-4"><use href="#scene"/></svg><span class="ml-1">detail.scene</span></div>
            <div class="flex gap-1.5 pt-0.5 pr-0.5"><svg class="size-3"><use href="#min"/></svg><svg class="size-3"><use href="#max"/></svg></div>
          </div>
          <div class="mt-0.5 mr-0.5 ml-0.5 flex min-h-0 flex-1 border border-[#0ff]">

            <!-- palette -->
            <aside class="flex w-[147px] shrink-0 flex-col bg-white">
              <div class="flex h-6 shrink-0 items-center border-b border-[#a8a8a8] bg-linear-to-b from-white to-[#e4e4e8] pl-2 text-xs"><svg class="h-2.5 w-1.5" viewBox="0 0 6 10"><path d="M5.500 1v8L1 5z" fill="#fff" stroke="#6b6b5c"/></svg><svg class="mr-[3px] ml-3 size-4"><use href="#palette"/></svg>Palette</div>
              <div class="grid h-12 shrink-0 grid-cols-2 items-start border-b border-[#a8a8a8] pt-1 pr-[9px] pl-[3px] text-center">
                <button class="flex h-10 w-[60px] flex-col items-center bg-[#cfe2fa] leading-[14px]"><svg class="h-6 w-5"><use href="#cursor"/></svg>Select</button>
                <button class="flex flex-col items-center leading-[14px]"><svg class="size-[18px]"><use href="#inspect"/></svg>Inspector</button>
              </div>
              <div class="mt-px flex h-5 shrink-0 items-center border-t border-[#c8c8c8] bg-[#e3e3e8] pr-[5px] pl-0.5"><svg class="mr-[3px] size-4"><use href="#folder"/></svg><span class="flex-1">Basic</span><svg class="h-2.5 w-3"><use href="#pin"/></svg></div>
              <div class="relative h-[238px] shrink-0 overflow-hidden border-b border-[#a8a8a8]">
                <div id="basic" class="-ml-0.5 grid grid-cols-2 pt-1.5 pr-2"></div>
                <div class="absolute bottom-0 left-9 grid h-1.5 w-[76px] place-items-center bg-[#999]/70"><svg class="h-1 w-[7px] text-[#eee]"><use href="#arrow"/></svg></div>
              </div>
              <div class="mt-px flex h-5 shrink-0 items-center border-t border-[#c8c8c8] bg-[#e3e3e8] pr-[5px] pl-0.5"><svg class="mr-[3px] size-4"><use href="#folder"/></svg><span class="flex-1">Container</span><svg class="h-2.5 w-3"><use href="#pin"/></svg></div>
              <div id="container" class="-ml-0.5 grid grid-cols-2 pt-1.5 pr-2"></div>
            </aside>

            <!-- canvas -->
            <div class="flex min-w-0 flex-1 flex-col pl-0.5">
              <div class="flex min-h-0 flex-1">
                <div class="flex min-w-0 flex-1 flex-col items-start overflow-hidden bg-[#999] pl-[35px]">
                  <div class="ml-1.5 h-[9px] overflow-hidden bg-white px-0.5 text-xs leading-[11px]">Scene</div>
                  <div class="relative h-[450px] w-[320px] bg-[#f5f5f5] shadow-[8px_0_6px_-3px_#444,-8px_0_6px_-3px_#444] outline outline-dotted outline-[#888]">
                    <div class="h-[49px] bg-white pt-1 text-center font-['DejaVu_Sans_Mono',monospace] text-[43px] leading-[44px] font-bold whitespace-nowrap"><span class="text-[#f00]">HOT</span> News</div>
                    <div class="h-[7px] border-y border-dotted border-[#999] bg-[#c8c8c8]"></div>
                    <i class="absolute -top-[3px] -left-[3px] size-[5px] border border-black bg-white"></i>
                    <i class="absolute -top-[3px] left-1/2 size-[5px] -translate-x-1/2 border border-black bg-white"></i>
                    <i class="absolute -top-[3px] -right-[3px] size-[5px] border border-black bg-white"></i>
                    <i class="absolute top-1/2 -left-[3px] size-[5px] -translate-y-1/2 border border-black bg-white"></i>
                    <i class="absolute top-1/2 -right-[3px] size-[5px] -translate-y-1/2 border border-black bg-white"></i>
                    <i class="absolute -bottom-0.5 -left-[3px] size-[5px] border border-b-0 border-black bg-white"></i>
                    <i class="absolute -bottom-0.5 left-1/2 size-[5px] -translate-x-1/2 border border-b-0 border-black bg-white"></i>
                    <i class="absolute -right-[3px] -bottom-0.5 size-[5px] border border-b-0 border-black bg-white"></i>
                  </div>
                </div>
                <div class="flex w-[17px] flex-col bg-[#f0f0f8]">
                  <button aria-label="Scroll up" class="grid h-[17px] place-items-center rounded-xs border border-[#9a9ab2] bg-linear-to-br from-white to-[#c6c6da]"><svg class="size-[9px] rotate-180"><use href="#chev"/></svg></button>
                  <div class="flex min-h-0 flex-1 flex-col pt-[10px]"><div class="grid flex-1 place-items-center rounded-xs border border-[#9a9ab2] bg-linear-to-r from-white to-[#d0d0e0]"><i class="h-2 w-2 bg-[repeating-linear-gradient(#9a9ab2_0_1px,#fff_1px_2px)]"></i></div></div>
                  <button aria-label="Scroll down" class="grid h-[17px] place-items-center rounded-xs border border-[#9a9ab2] bg-linear-to-br from-white to-[#c6c6da]"><svg class="size-[9px]"><use href="#chev"/></svg></button>
                </div>
              </div>
              <div class="mr-[17px] flex h-[17px] shrink-0 justify-between bg-linear-to-b from-[#e8e8f2] to-white">
                <button disabled aria-label="Scroll left" class="grid w-[17px] place-items-center rounded-xs border border-[#cfcbb8] bg-[#eceae0]"><svg class="size-[9px] rotate-90 opacity-30"><use href="#chev"/></svg></button>
                <button disabled aria-label="Scroll right" class="grid w-[17px] place-items-center rounded-xs border border-[#cfcbb8] bg-[#eceae0]"><svg class="size-[9px] -rotate-90 opacity-30"><use href="#chev"/></svg></button>
              </div>
            </div>
          </div>
          <div class="relative flex h-[17px] shrink-0 border-t border-[#9c9ca4] pl-0.5 text-xs">
            <button class="w-[46px] border-r border-b border-[#9c9ca4] bg-white pl-px text-center">Design</button>
            <button class="w-5 border-r border-[#9c9ca4] text-center">IE</button>
            <button class="w-11 border-r border-[#9c9ca4] text-center">Webkit</button>
          </div>
          <div class="pointer-events-none absolute top-[22px] -bottom-0.5 -left-0.5 w-[153px] border-2 border-[#f00]"></div>
          <b class="absolute -top-[11px] -left-[5px] z-20 grid size-11 place-items-center rounded-full border-3 border-[#8c3836] bg-[#c0504d] font-['Noto_Sans'] text-[22px] font-normal text-white">4</b>
          <b class="absolute -top-[11px] left-[182px] z-20 grid size-11 place-items-center rounded-full border-3 border-[#8c3836] bg-[#c0504d] font-['Noto_Sans'] text-[22px] font-normal text-white">5</b>
        </section>

        <div class="mt-1 ml-px flex h-7 shrink-0 rounded-t border border-[#9c9ca4]">
          <div class="flex flex-1">
            <div class="flex w-[103px] items-center rounded-tr border-r border-[#9c9ca4] bg-linear-to-b from-white to-[#e0dfe3] pb-1 pl-0.5"><svg class="mr-1 size-4"><use href="#problems"/></svg>Problems<svg class="ml-[7px] size-3"><use href="#x"/></svg></div>
            <div class="mb-1 flex w-[63px] items-center border-r border-b border-[#9c9ca4] pl-1"><svg class="mr-1 size-4"><use href="#tasks"/></svg>Tasks</div>
            <div class="mb-1 flex w-[63px] items-center border-r border-b border-[#9c9ca4] pl-1"><svg class="mr-0.5 size-4"><use href="#bug"/></svg>Debug</div>
            <div class="mb-1 flex w-[71px] items-center border-r border-b border-[#9c9ca4] pl-1"><svg class="mr-1 size-4"><use href="#servers"/></svg><span class="text-xs">Servers</span></div>
            <div class="mb-1 flex w-[77px] items-center border-r border-b border-[#9c9ca4] pl-1"><svg class="mr-1 size-4"><use href="#snippets"/></svg>Snippets</div>
            <div class="mb-1 flex w-[82px] items-center border-r border-b border-[#9c9ca4] pl-1 font-bold"><svg class="mr-1 size-4"><use href="#console"/></svg>Console</div>
            <div class="mb-1 flex flex-1 justify-end gap-[7px] border-b border-[#9c9ca4] pt-[3px] pr-1"><svg class="size-3"><use href="#menu"/></svg><svg class="size-3"><use href="#min"/></svg><svg class="size-3"><use href="#max"/></svg></div>
          </div>
        </div>
      </div>

      <!-- right column -->
      <section class="relative flex w-[395px] shrink-0 flex-col border-2 border-[#f00]">
        <div class="flex h-[22px] shrink-0 border-b border-[#9c9ca4]">
          <div class="flex w-28 items-center bg-linear-to-b from-white to-[#f4f4f4] pl-[25px] text-xs">QuickStyler<svg class="ml-1.5 size-3"><use href="#x"/></svg></div>
          <div class="flex w-[81px] items-center border-r border-[#9c9ca4] pl-[25px] text-xs">Attributes</div>
          <div class="flex flex-1 justify-end gap-1.5 pt-0.5 pr-1"><svg class="size-3"><use href="#min"/></svg><svg class="size-3"><use href="#max"/></svg></div>
        </div>
        <div class="flex h-[34px] shrink-0 items-center border-b border-[#c8c8cc] bg-linear-to-b from-white to-[#f2f2f2] pl-[11px] text-[13px] font-bold"><svg class="mr-1 size-4"><use href="#e"/></svg>Scene</div>

        <div class="flex min-h-0 flex-1 bg-white">
          <div class="flex min-w-0 flex-1 flex-col gap-1.5 overflow-hidden pt-1 pr-1.5 pl-2">

            <div class="h-[103px] shrink-0 rounded-t border-t-2 border-[#d0d0d4] bg-linear-to-b from-[#eee] to-[#e0dfe3] to-20% pl-2.5">
              <h2 class="-ml-1 flex h-4 items-center pl-px font-bold text-[#5a5a60]"><svg class="mt-0.5 mr-1.5 h-1 w-2"><use href="#arrow"/></svg>Text</h2>
              <div class="mt-2 flex items-start pl-1 text-xs">
                <label for="font" class="w-[72px] pt-0.5">Font</label>
                <div class="relative w-[186px]">
                  <select id="font" class="h-5 w-full appearance-none border border-[#7f9db9] bg-white pl-px text-[13px]"><option>맑은 고딕</option></select>
                  <span class="pointer-events-none absolute inset-y-px right-px grid w-4 place-items-center rounded-xs border border-[#8e8ea6] bg-linear-to-b from-white to-[#c6c6da]"><svg class="size-[9px]"><use href="#chev"/></svg></span>
                </div>
                <div class="relative ml-[5px] w-[73px]">
                  <input aria-label="Font size" value="16" class="h-[21px] w-full border border-[#a5acb2] bg-white pb-0.5 pl-[3px]">
                  <span class="absolute inset-y-px right-px flex w-[15px] flex-col">
                    <button aria-label="Increase" class="grid flex-1 place-items-center rounded-xs border border-[#9a9aaa] bg-[#e4e4ee]"><svg class="h-1 w-[7px] rotate-180"><use href="#arrow"/></svg></button>
                    <button aria-label="Decrease" class="grid flex-1 place-items-center rounded-xs border border-[#9a9aaa] bg-[#e4e4ee]"><svg class="h-1 w-[7px]"><use href="#arrow"/></svg></button>
                  </span>
                </div>
              </div>
              <div class="relative mt-[5px] ml-[76px] w-12">
                <select aria-label="Text colour" class="block h-5 w-full appearance-none border border-[#7f9db9] bg-white"><option></option></select>
                <span class="pointer-events-none absolute inset-y-px right-px grid w-4 place-items-center rounded-xs border border-[#8e8ea6] bg-linear-to-b from-white to-[#c6c6da]"><svg class="size-[9px]"><use href="#chev"/></svg></span>
              </div>
              <div class="mt-1.5 flex items-center font-['Liberation_Serif',serif] text-sm text-[#444]">
                <button aria-label="Align left" class="grid size-[22px] place-items-center rounded-sm border border-[#8fa8b8] bg-white"><svg class="size-4"><use href="#al-l"/></svg></button>
                <button aria-label="Align centre" class="ml-1"><svg class="size-4"><use href="#al-c"/></svg></button>
                <button aria-label="Align right" class="ml-[7px]"><svg class="size-4"><use href="#al-r"/></svg></button>
                <i class="ml-[7px] h-5 w-px bg-[#b4b4bc]"></i>
                <button class="ml-[7px] w-4 font-bold">B</button>
                <button class="ml-[7px] w-4 font-bold italic">I</button>
                <button class="ml-[7px] w-4 underline">U</button>
                <i class="ml-[7px] h-5 w-px bg-[#b4b4bc]"></i>
                <button aria-label="Line height" class="ml-1.5"><svg class="size-4"><use href="#lineh"/></svg></button>
              </div>
            </div>

            <div class="flex h-[376px] shrink-0 flex-col rounded-t border-t-2 border-[#d0d0d4] bg-linear-to-b from-[#eee] to-[#e0dfe3] to-5% pl-[6px]">
              <h2 class="flex h-4 shrink-0 items-center pl-px font-bold text-[#5a5a60]"><svg class="mt-0.5 mr-1.5 h-1 w-2"><use href="#arrow"/></svg>Color Edit</h2>
              <div class="mt-2 flex flex-col gap-[5px] pl-[5px] text-xs">
                <div class="flex h-6 items-center"><input type="radio" name="c" id="bgc" checked class="size-[13px] appearance-none rounded-full border border-[#33608c] bg-white checked:bg-[radial-gradient(circle,#2fae2f_0_35%,#fff_45%)]"><label for="bgc" class="ml-[3px] w-[111px] text-[13px]">Background Color</label><i class="size-6 border border-[#a5acb2] bg-[#e0dfe3] outline-1 -outline-offset-2 outline-white"></i><button class="ml-1.5 h-5 w-[42px] rounded-[3px] border border-[#003c74] bg-linear-to-b from-white to-[#d4d4e4]">Reset</button></div>
                <div class="flex h-6 items-center"><input type="radio" name="c" id="fgc" class="size-[13px] appearance-none rounded-full border border-[#33608c] bg-white checked:bg-[radial-gradient(circle,#2fae2f_0_35%,#fff_45%)]"><label for="fgc" class="ml-[3px] w-[111px] text-[13px]">Foreground Color</label><i class="size-6 border border-[#a5acb2] bg-black outline-1 -outline-offset-2 outline-white"></i><button class="ml-1.5 h-5 w-[42px] rounded-[3px] border border-[#003c74] bg-linear-to-b from-white to-[#d4d4e4]">Reset</button></div>
                <div class="flex h-6 items-center"><input type="radio" name="c" id="bdc" class="size-[13px] appearance-none rounded-full border border-[#33608c] bg-white checked:bg-[radial-gradient(circle,#2fae2f_0_35%,#fff_45%)]"><label for="bdc" class="ml-[3px] w-[111px] text-[13px]">Border Color</label><i class="size-6 border border-[#a5acb2] bg-black outline-1 -outline-offset-2 outline-white"></i><button class="ml-1.5 h-5 w-[42px] rounded-[3px] border border-[#003c74] bg-linear-to-b from-white to-[#d4d4e4]">Reset</button></div>
              </div>
              <div class="mt-[11px] flex h-[22px] shrink-0 items-end gap-0.5 text-[13px]">
                <button class="z-10 -mb-px -mr-0.5 flex h-[23px] w-[102px] items-center rounded-t border border-t-2 border-b-0 border-[#919b9c] border-t-[#f5a623] bg-[#fcfcfe] pb-1 pl-[7px]"><svg class="mr-[9px] size-4"><use href="#sw"/></svg><span>Swatches</span></button>
                <button class="flex h-5 w-[67px] items-center rounded-t border border-b-0 border-[#919b9c] bg-linear-to-b from-white to-[#ecebf4] pl-1"><svg class="mr-[9px] size-4"><use href="#solid"/></svg>Solid</button>
                <button class="flex h-5 w-[87px] items-center rounded-t border border-b-0 border-[#919b9c] bg-linear-to-b from-white to-[#ecebf4] pl-1"><i class="mr-[9px] size-4 rounded-full border border-[#888] bg-[conic-gradient(#fd5,#f64,#f4c,#66f,#4cf,#4e6,#fd5)]"></i>Gradient</button>
                <button class="flex h-5 w-[75px] items-center rounded-t border border-b-0 border-[#919b9c] bg-linear-to-b from-white to-[#ecebf4] pl-1"><svg class="mr-[9px] size-4"><use href="#imgs"/></svg>Image</button>
              </div>
              <div class="mr-2 flex h-[234px] shrink-0 flex-col border border-[#919b9c] bg-white px-2 pt-1.5">
                <div class="flex items-center text-xs">
                  <div class="relative w-[265px]">
                    <select aria-label="Swatch set" class="h-5 w-full appearance-none border border-[#7f9db9] bg-white pl-[3px] text-xs"><option>216 Safety Colors</option></select>
                    <span class="pointer-events-none absolute inset-y-px right-px grid w-4 place-items-center rounded-xs border border-[#8e8ea6] bg-linear-to-b from-white to-[#c6c6da]"><svg class="size-[9px]"><use href="#chev"/></svg></span>
                  </div>
                  <button aria-label="Open swatches" class="ml-1.5 grid h-6 w-[26px] place-items-center rounded-[3px] border border-[#003c74] bg-linear-to-b from-white to-[#d4d4e4]"><svg class="size-4"><use href="#folder"/></svg></button>
                  <button aria-label="Transparent" class="ml-[7px] grid h-6 w-[26px] place-items-center rounded-[3px] border border-[#003c74] bg-linear-to-b from-white to-[#d4d4e4]"><svg class="size-4"><use href="#checker"/></svg></button>
                </div>
                <div class="mt-[6px] flex h-[190px] justify-between overflow-hidden border border-[#a5acb2] bg-[#e0dfe3] p-px">
                  <div id="swatches" class="mt-[5px] ml-[5px] grid grid-cols-[repeat(16,15px)] content-start gap-0.5 overflow-hidden bg-white p-0.5 pb-0"></div>
                  <div class="flex w-[17px] flex-col bg-[#f0f0f8]">
                    <button aria-label="Scroll up" class="grid h-[17px] place-items-center rounded-xs border border-[#9a9ab2] bg-linear-to-br from-white to-[#c6c6da]"><svg class="size-[9px] rotate-180"><use href="#chev"/></svg></button>
                    <div class="flex-1"><div class="grid h-[120px] place-items-center rounded-xs border border-[#9a9ab2] bg-linear-to-r from-white to-[#d0d0e0]"><i class="h-2 w-2 bg-[repeating-linear-gradient(#9a9ab2_0_1px,#fff_1px_2px)]"></i></div></div>
                    <button aria-label="Scroll down" class="grid h-[17px] place-items-center rounded-xs border border-[#9a9ab2] bg-linear-to-br from-white to-[#c6c6da]"><svg class="size-[9px]"><use href="#chev"/></svg></button>
                  </div>
                </div>
              </div>
            </div>

            <div class="min-h-0 flex-1 overflow-hidden rounded-t border-t-2 border-[#d0d0d4] bg-linear-to-b from-[#eee] to-[#e0dfe3] to-40% pl-[6px]">
              <h2 class="flex h-4 items-center pl-px font-bold text-[#5a5a60]"><svg class="mt-0.5 mr-1.5 h-1 w-2"><use href="#arrow"/></svg>Border</h2>
              <div class="mt-2 flex items-center pl-[5px]">
                <label for="bw" class="w-[75px] text-[13px]">Border</label>
                <div class="relative w-[212px] text-xs">
                  <input id="bw" value="0" class="block h-[21px] w-full border border-[#a5acb2] bg-white pb-0.5 pl-[3px]">
                  <span class="absolute inset-y-px right-px flex w-[15px] flex-col">
                    <button aria-label="Increase" class="grid flex-1 place-items-center rounded-xs border border-[#9a9aaa] bg-[#e4e4ee]"><svg class="h-1 w-[7px] rotate-180"><use href="#arrow"/></svg></button>
                    <button aria-label="Decrease" class="grid flex-1 place-items-center rounded-xs border border-[#9a9aaa] bg-[#e4e4ee]"><svg class="h-1 w-[7px]"><use href="#arrow"/></svg></button>
                  </span>
                </div>
                <svg class="ml-2 size-4"><use href="#lines"/></svg><svg class="ml-2 size-4"><use href="#cells"/></svg>
              </div>
              <div class="mt-1.5 mr-3 ml-20 h-2 border-t border-[#8a8a92]"></div>
            </div>
          </div>
          <div class="flex w-4 flex-col bg-[#f0f0f8]">
            <button aria-label="Scroll up" class="grid h-[17px] place-items-center rounded-xs border border-[#9a9ab2] bg-linear-to-br from-white to-[#c6c6da]"><svg class="size-[9px] rotate-180"><use href="#chev"/></svg></button>
            <div class="flex min-h-0 flex-1 flex-col pb-[27px]"><div class="grid flex-1 place-items-center rounded-xs border border-[#9a9ab2] bg-linear-to-r from-white to-[#d0d0e0]"><i class="h-2 w-2 bg-[repeating-linear-gradient(#9a9ab2_0_1px,#fff_1px_2px)]"></i></div></div>
            <button aria-label="Scroll down" class="grid h-[17px] place-items-center rounded-xs border border-[#9a9ab2] bg-linear-to-br from-white to-[#c6c6da]"><svg class="size-[9px]"><use href="#chev"/></svg></button>
          </div>
        </div>
        <b class="absolute -top-[11px] -left-[9px] z-20 grid size-11 place-items-center rounded-full border-3 border-[#8c3836] bg-[#c0504d] font-['Noto_Sans'] text-[22px] font-normal text-white">6</b>
        <b class="absolute -top-[11px] left-[102px] z-20 grid size-11 place-items-center rounded-full border-3 border-[#8c3836] bg-[#c0504d] font-['Noto_Sans'] text-[22px] font-normal text-white">7</b>
      </section>
    </main>

    <!-- status bar -->
    <footer class="flex h-[30px] shrink-0 items-center pl-1.5">
      <i class="h-4 w-0 border-l-2 border-dotted border-[#9a9a94]"></i>
      <svg class="ml-[9px] size-4"><use href="#fast"/></svg>
      <svg class="ml-[46px] size-4"><use href="#e"/></svg>
      <span class="ml-[5px] w-[349px]">Scene/Panel/Panel.styles</span>
      <i class="h-[26px] w-[104px] border-l border-[#9c9ca4]"></i>
      <i class="h-[26px] w-[98px] border-l border-[#9c9ca4]"></i>
      <i class="h-[26px] w-[98px] border-l border-[#9c9ca4]"></i>
      <i class="h-[26px] w-[137px] border-l border-[#9c9ca4]"></i>
      <i class="h-4 w-0 border-l-2 border-dotted border-[#9a9a94]"></i>
    </footer>
  </div>
  </div>
</div>
</div>

<script>
// Guide cells: first letter is the line (f full, u upper half, d lower half, n none),
// second is the joint (h branch, p plus box, m minus box, o nothing).
function guide(code) {
  const line = { f: 'M9.5 0v17', u: 'M9.5 0v8.5', d: 'M9.5 8.5v8.5', n: '' }[code[0]];
  const joint = code[1];
  let s = '<svg class="h-[17px] w-[19px] shrink-0" viewBox="0 0 19 17"><path d="' + line + (joint !== 'o' ? 'M9.5 8.5h9' : '') + '" fill="none" stroke="#9a9a8a" stroke-dasharray="1 1"/>';
  if (joint === 'p' || joint === 'm') {
    s += '<path d="M5.5 4.5h8v8h-8z" fill="#f6f6fa" stroke="#8a8a9c"/><path d="M7 8.500h5' + (joint === 'p' ? 'M9.500 6v5' : '') + '" stroke="#000"/>';
  }
  return s + '</svg>';
}
function tree(id, rows) {
  document.getElementById(id).innerHTML = rows.map(([cells, icon, text, sel]) =>
    '<div class="flex h-[17px] items-center whitespace-nowrap">' + cells.split(' ').map(guide).join('') +
    '<svg class="ml-0.5 size-4 shrink-0"><use href="#' + icon + '"/></svg>' +
    '<span class="' + (sel ? 'ml-0.5 bg-[#e0dfe3] px-0.5 pr-1.5' : 'ml-1') + '">' + text + '</span></div>').join('');
}
tree('explorer', [
  ['fo fh', 'file', 'config.json'], ['fo fp', 'js', 'detail.js'], ['fo fh', 'scene', 'detail.scene'],
  ['fo fh', 'png', 'icon.png'], ['fo fp', 'jswarn', 'list.js'], ['fo fh', 'scene', 'list.scene', 1],
  ['fo up', 'js', 'main.js'], ['um', 'proj', 'test'], ['no fp', 'books', 'JavaScript Resource'],
  ['no fh', 'file', 'config.json'], ['no fh', 'png', 'icon.png'], ['no fp', 'js', 'main.js'],
  ['no fh', 'scene', 'main.scene'], ['no uh', 'html', 'test.html']
]);
tree('outline', [
  ['dh', 'xml', 'xml'], ['um', 'e', 'Scene xmlns=http://mobello'], ['no fp', 'e', 'Table moreCell=true'],
  ['no fm', 'e', 'Panel'], ['no fo fh', 'e', 'Panel.styles width=1'], ['no fo up', 'e', 'ImageView src=@ap'],
  ['no up', 'e', 'Panel']
]);
function palette(id, items) {
  document.getElementById(id).innerHTML = items.map(([icon, text]) =>
    '<button class="flex h-[35px] flex-col items-center leading-[14px]"><svg class="size-4 shrink-0"><use href="#p-' + icon + '"/></svg>' + text + '</button>').join('');
}
palette('basic', [['label', 'Label'], ['button', 'Button'], ['segment', 'Segme...'], ['select', 'Select'], ['image', 'Image...'],
  ['textarea', 'TextArea'], ['textfield', 'TextField'], ['textview', 'TextVi...'], ['slider', 'Slider'], ['spinner', 'Spinner'],
  ['switch', 'Switch'], ['check', 'Check...'], ['radio', 'Radio'], ['radios', 'Radio']]);
palette('container', [['panel', 'Panel'], ['scroll', 'ScrollP...'], ['table', 'Table'], ['tablecell', 'Table...'],
  ['tablesec', 'TableS...'], ['toolbar', 'ToolBar'], ['carousel', 'Carousel'], ['dialog', 'Dialog'], ['action', 'Action...']]);

const colors = `fff ccc 999 666 333 000 fc0 f90 f60 f30 000 333 666 999 ccc fff
9c0 000 000 000 000 c90 fc3 fc6 f96 f63 c30 000 000 000 000 c03
cf0 cf3 330 660 990 cc0 ff0 c93 c63 300 600 900 c00 f00 f36 f03
9f0 cf6 9c3 663 993 cc3 ff3 960 930 633 933 c33 f33 c36 f69 f06
6f0 9f6 6c3 690 996 cc6 ff6 963 630 966 c66 f66 903 c39 f6c f09
3f0 6f3 390 6c0 9f3 cc9 ff9 c96 c60 c99 f99 f39 c06 906 f3c f0c
0c0 3c0 360 693 9c6 cf9 ffc fc9 f93 fcc f9c c69 936 603 c09 303
3c3 6c6 0f0 3f3 6f6 9f9 cfc 000 000 000 c9c 969 939 909 636 606
060 363 090 393 696 9c9 000 000 000 fcf f9f f6f f3f f0f c6c c3c
030 0c3 063 396 6c9 9fc cff 39f 9cf ccf c9f 96c 639 306 90c c0c
0f3 3f6 093 0c6 3f9 9ff 9cc 06c 69c 99f 99c 93f 60c 609 c3f c0f
0f6 6f9 3c6 096 6ff 6cc 699 036 369 66f 66c 669 309 93c c6f 90f
0f9 6fc 3c9 3ff 3cc 399 366 069 039 33f 33c 339 336 63c 96f 60f`.split(/\s+/);
document.getElementById('swatches').innerHTML = colors.map(c =>
  '<button aria-label="#' + c + '" class="h-3 border border-[#a0a0a0]" style="background:#' + c + '"></button>').join('');
</script>
</body>
</html>
